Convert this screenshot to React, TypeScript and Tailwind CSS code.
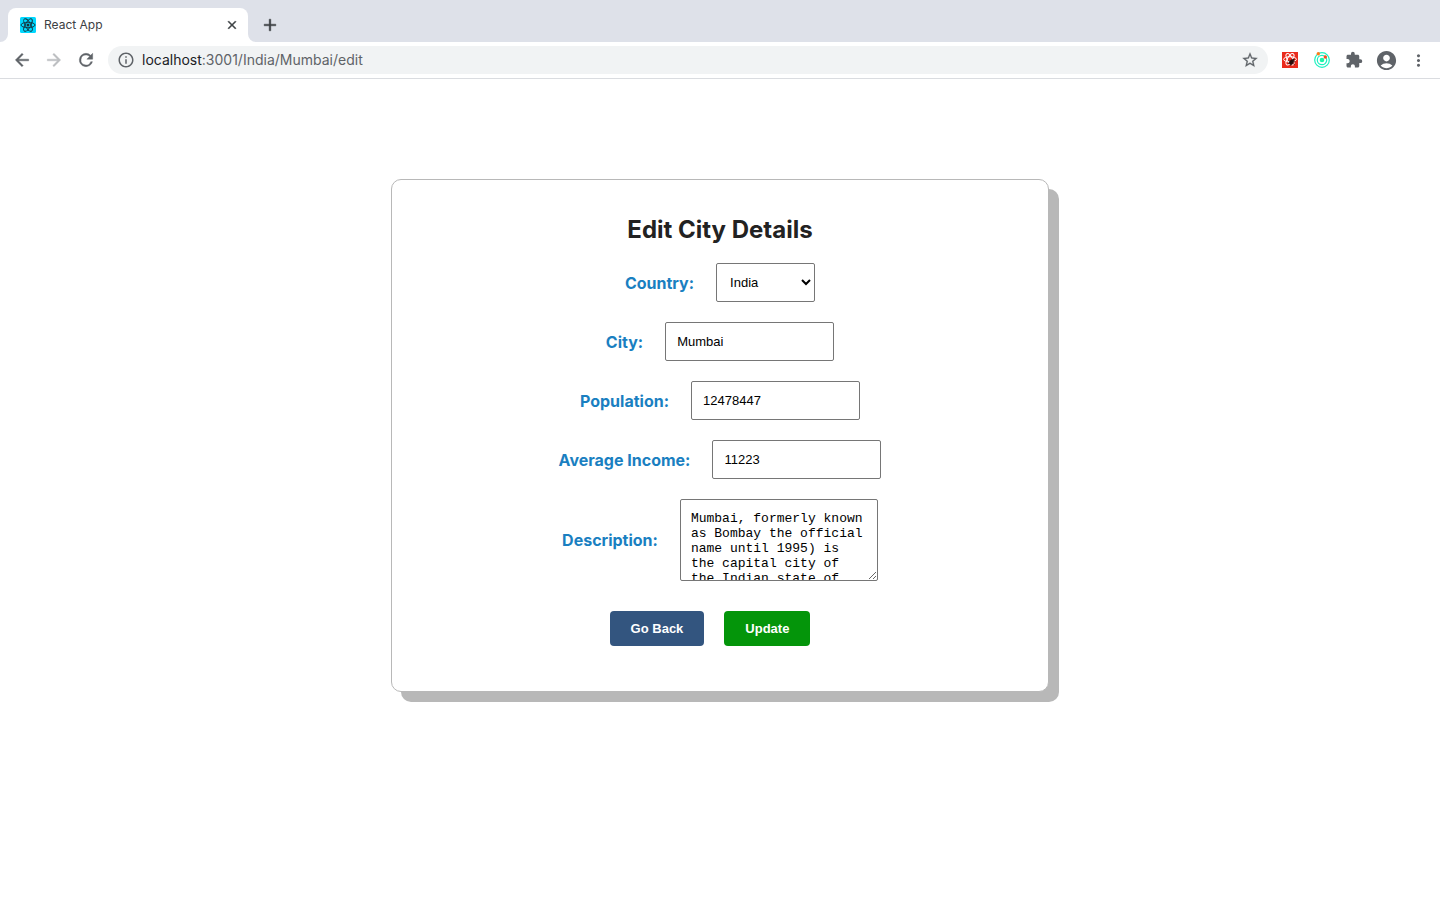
import React from "react";
import { MdAccountCircle, MdExtension, MdInfoOutline, MdMoreVert } from "react-icons/md";

const description =
  "Mumbai, formerly known as Bombay the official name until 1995) is the capital city of the Indian state of Maharashtra.";

const glyphs = {
  back: "M20 11H7.83l5.59-5.59L12 4l-8 8 8 8 1.41-1.41L7.83 13H20v-2z",
  forward: "M12 4l-1.41 1.41L16.17 11H4v2h12.17l-5.58 5.59L12 20l8-8z",
  reload:
    "M17.65 6.35A7.958 7.958 0 0 0 12 4a8 8 0 1 0 7.73 10h-2.08A6 6 0 1 1 12 6c1.66 0 3.14.69 4.22 1.78L13 11h7V4l-2.35 2.35z",
  close: "M19 6.41 17.59 5 12 10.59 6.41 5 5 6.41 10.59 12 5 17.59 6.41 19 12 13.41 17.59 19 19 17.59 13.41 12z",
  plus: "M19 13h-6v6h-2v-6H5v-2h6V5h2v6h6v2z",
  star: "M22 9.24l-7.19-.62L12 2 9.19 8.63 2 9.24l5.46 4.73L5.82 21 12 17.27 18.18 21l-1.63-7.03L22 9.24zM12 15.4l-3.76 2.27 1-4.28-3.32-2.88 4.38-.38L12 6.1l1.71 4.04 4.38.38-3.32 2.88 1 4.28L12 15.4z",
};

function Glyph({ name, className }: { name: keyof typeof glyphs; className: string }) {
  return (
    <svg viewBox="0 0 24 24" fill="currentColor" stroke="currentColor" className={className} aria-hidden="true">
      <path d={glyphs[name]} />
    </svg>
  );
}

function ReactFavicon() {
  return (
    <svg viewBox="0 0 16 16" className="size-4 shrink-0" aria-hidden="true">
      <rect width="16" height="16" rx="1.5" fill="#00d8ff" />
      <g fill="none" stroke="#15303a" strokeWidth="0.9">
        <ellipse cx="8" cy="8" rx="7" ry="2.7" />
        <ellipse cx="8" cy="8" rx="7" ry="2.7" transform="rotate(60 8 8)" />
        <ellipse cx="8" cy="8" rx="7" ry="2.7" transform="rotate(120 8 8)" />
      </g>
      <circle cx="8" cy="8" r="1.5" fill="#15303a" />
    </svg>
  );
}

function ReactDevToolsIcon() {
  return (
    <svg viewBox="0 0 16 16" className="size-4" aria-hidden="true">
      <rect width="16" height="16" fill="#ea2a1c" />
      <g fill="none" stroke="#fff" strokeWidth="1">
        <ellipse cx="8" cy="7.3" rx="6.4" ry="2.6" />
        <ellipse cx="8" cy="7.3" rx="6.4" ry="2.6" transform="rotate(60 8 7.3)" />
        <ellipse cx="8" cy="7.3" rx="6.4" ry="2.6" transform="rotate(120 8 7.3)" />
      </g>
      <g stroke="#2a0d0a" strokeWidth="0.7" fill="#2a0d0a">
        <ellipse cx="9.4" cy="10.2" rx="1.7" ry="2.5" transform="rotate(35 9.4 10.2)" />
        <circle cx="11.4" cy="7.8" r="0.9" />
        <path d="M6.2 8.4 8 9.4M5.8 11.4 8 10.8M8.6 13.8 9.4 12M13.2 9.6 11 10M12.8 12.8 10.8 11.4" />
      </g>
    </svg>
  );
}

function OrbitIcon() {
  return (
    <svg viewBox="0 0 16 16" className="size-4" aria-hidden="true">
      <g fill="none" stroke="#1df0c0" strokeWidth="1.2">
        <circle cx="8" cy="8" r="7.3" />
        <circle cx="8" cy="8" r="4.7" />
      </g>
      <circle cx="8" cy="8" r="2.3" fill="#1df5a8" />
      <circle cx="4.3" cy="1.8" r="1.7" fill="#ff7a1a" />
      <circle cx="11.3" cy="5" r="1.7" fill="#ff4a1a" />
    </svg>
  );
}

function TabStrip() {
  return (
    <div className="flex h-[42px] items-end bg-[#dee1e9]">
      <svg viewBox="0 0 8 8" className="size-2" aria-hidden="true">
        <path d="M8 0v8H0a8 8 0 0 0 8-8z" fill="#fff" />
      </svg>
      <div className="flex h-[34px] w-60 items-center gap-2 rounded-t-lg bg-white pr-2 pl-3">
        <ReactFavicon />
        <span className="flex-1 text-xs text-[#3c4043]">React App</span>
        <button type="button" aria-label="Close tab" className="flex size-4 items-center justify-center text-[#3c4043]">
          <Glyph name="close" className="size-[14px] stroke-[0.8]" />
        </button>
      </div>
      <svg viewBox="0 0 8 8" className="size-2" aria-hidden="true">
        <path d="M0 0v8h8a8 8 0 0 1-8-8z" fill="#fff" />
      </svg>
      <button type="button" aria-label="New tab" className="flex h-[34px] w-7 items-center justify-center text-[#3c4043]">
        <Glyph name="plus" className="size-5 stroke-[0.5]" />
      </button>
    </div>
  );
}

function Toolbar() {
  return (
    <div className="flex h-[37px] items-center border-b border-[#dadce0] bg-white pr-[6px] pl-3 text-[#5f6368]">
      <div className="flex gap-3">
        <button type="button" aria-label="Back">
          <Glyph name="back" className="size-5 stroke-[0.5]" />
        </button>
        <button type="button" aria-label="Forward" className="text-[#bcbec1]">
          <Glyph name="forward" className="size-5 stroke-[0.5]" />
        </button>
        <button type="button" aria-label="Reload">
          <Glyph name="reload" className="size-5 stroke-[0.5]" />
        </button>
      </div>
      <div className="ml-3 flex h-7 flex-1 items-center rounded-full bg-[#f1f3f4] px-[9px]">
        <MdInfoOutline className="size-[18px] shrink-0" />
        <div className="ml-[7px] flex-1 text-sm">
          <span className="text-[#202124]">localhost</span>:3001/India/Mumbai/edit
        </div>
        <button type="button" aria-label="Bookmark this page">
          <Glyph name="star" className="size-[18px] stroke-[0.3]" />
        </button>
      </div>
      <div className="ml-[6px] flex items-center">
        <button type="button" aria-label="React Developer Tools" className="flex w-8 justify-center">
          <ReactDevToolsIcon />
        </button>
        <button type="button" aria-label="Orbit" className="flex w-8 justify-center">
          <OrbitIcon />
        </button>
        <button type="button" aria-label="Extensions" className="flex w-8 justify-center">
          <MdExtension className="size-[18px]" />
        </button>
        <button type="button" aria-label="Profile" className="flex w-8 justify-center">
          <MdAccountCircle className="size-[23px]" />
        </button>
        <button type="button" aria-label="Menu" className="flex w-8 justify-center">
          <MdMoreVert className="size-[19px]" />
        </button>
      </div>
    </div>
  );
}

const controlClass =
  "rounded-[2px] border border-[#767676] bg-white font-['Liberation_Sans',Arial,sans-serif] text-black";

function Field({ id, label, children }: { id: string; label: string; children: React.ReactNode }) {
  return (
    <div className="flex items-center justify-center gap-[22px]">
      <label htmlFor={id} className="text-base font-bold text-[#1a7fc1]">
        {label}
      </label>
      {children}
    </div>
  );
}

function TextField({ id, label, value }: { id: string; label: string; value: string }) {
  return (
    <Field id={id} label={label}>
      <input
        id={id}
        type="text"
        defaultValue={value}
        className={`${controlClass} h-[39px] w-[169px] px-[11px] text-[13px]`}
      />
    </Field>
  );
}

export default function App() {
  return (
    <div className="min-h-screen bg-white font-['Inter','Noto_Sans',sans-serif]">
      <header>
        <TabStrip />
        <Toolbar />
      </header>
      <main className="flex justify-center px-4 pt-[100px] pb-10">
        <form
          onSubmit={(event) => event.preventDefault()}
          className="w-full max-w-[658px] rounded-[10px] border border-[#b8b8b8] bg-white px-5 pt-[34px] pb-[45px] shadow-[10px_10px_0_#b8b8b8]"
        >
          <h1 className="mb-[17px] text-center text-2xl font-bold text-[#222222]">Edit City Details</h1>
          <div className="flex flex-col gap-5">
            <Field id="country" label="Country:">
              <select
                id="country"
                defaultValue="India"
                className={`${controlClass} h-[39px] w-[99px] px-[9px] text-[13px]`}
              >
                <option>India</option>
                <option>Australia</option>
                <option>Canada</option>
                <option>USA</option>
              </select>
            </Field>
            <TextField id="city" label="City:" value="Mumbai" />
            <TextField id="population" label="Population:" value="12478447" />
            <TextField id="income" label="Average Income:" value="11223" />
            <Field id="description" label="Description:">
              <textarea
                id="description"
                defaultValue={description}
                className="h-[82px] w-[198px] resize overflow-hidden rounded-[2px] border border-[#767676] bg-white px-[10px] pt-[11px] pb-[10px] font-['Liberation_Mono','Courier_New',monospace] text-[13px] leading-[15px] text-black"
              />
            </Field>
          </div>
          <div className="mt-[30px] flex justify-center gap-5 pr-5 font-['Liberation_Sans',Arial,sans-serif] text-[13px] leading-[15px] font-bold text-white">
            <button type="button" className="rounded bg-[#33557f] px-[21px] py-[10px]">
              Go Back
            </button>
            <button type="submit" className="rounded bg-[#04950a] px-[21px] py-[10px]">
              Update
            </button>
          </div>
        </form>
      </main>
    </div>
  );
}
